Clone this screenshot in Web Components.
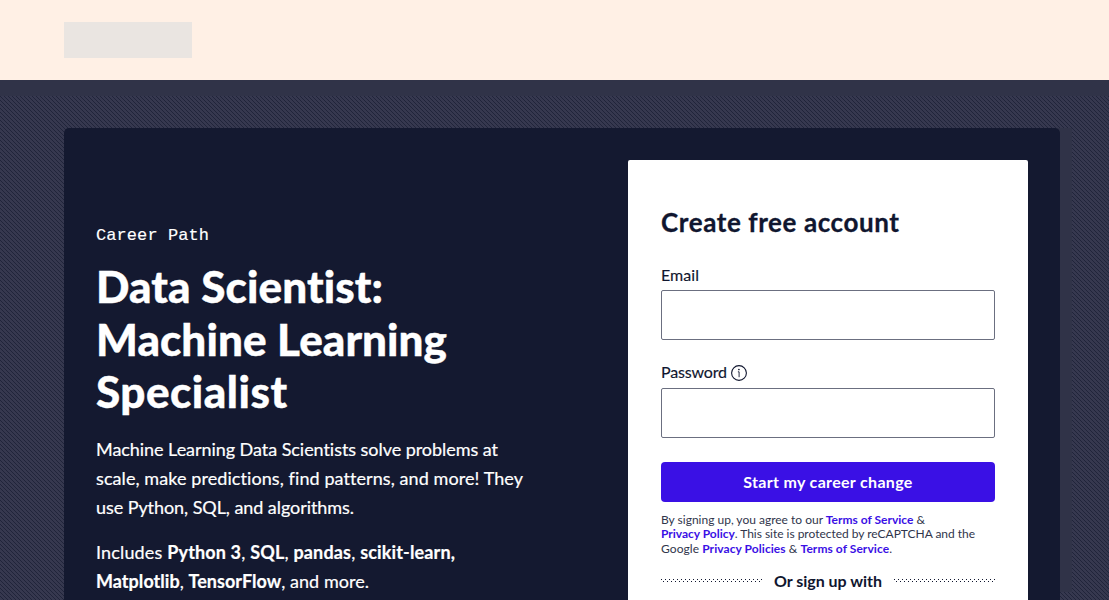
<!DOCTYPE html>
<html lang="en"><head><meta charset="utf-8"><title>Data Scientist: Machine Learning Specialist</title>
<style>html,body{margin:0;height:100%;overflow:hidden}body{font-family:Lato,"Liberation Sans",sans-serif;color:#10162f}</style></head><body>
<landing-page></landing-page>
<script>
const define=(name,html,setup)=>customElements.define(name,class extends HTMLElement{
  connectedCallback(){if(this.shadowRoot)return;this.attachShadow({mode:'open'}).innerHTML=html;if(setup)setup(this);}
});
// A single line of type whose tracking is adjusted to fill its measure.
define('text-line',`<style>:host{display:block;white-space:nowrap}span{display:inline-block;font-variant-ligatures:none}</style><span><slot></slot></span>`,el=>{
  const s=el.shadowRoot.querySelector('span');
  const w=s.getBoundingClientRect().width;
  s.style.letterSpacing=((+el.getAttribute('measure')-w)/(el.textContent.length-1)).toFixed(3)+'px';
});
define('site-header',`<style>:host{display:flex;align-items:center;height:80px;padding:0 64px;background:#fff0e5;box-sizing:border-box}i{width:128px;height:36px;background:#eae5e1}</style><i></i>`);
define('info-icon',`<style>:host{display:flex}</style><svg width="16" height="16" viewBox="0 0 16 16" fill="none" stroke="#10162f"><circle cx="8" cy="8" r="7.4" stroke-width="1.1"/><path d="M6.9 6.8h1.2v5.4" stroke-width=".9"/><circle cx="7.9" cy="4.5" r=".85" fill="#10162f" stroke="none"/></svg>`);
define('form-field',`<style>:host{display:block}label{display:flex;align-items:center;gap:4px;height:24px;font-size:16px;line-height:20px;-webkit-text-stroke:.15px}::slotted(text-line){margin-top:var(--label-shift,-2px)}input{display:block;box-sizing:border-box;width:100%;height:50px;margin:3px 0 0;border:1px solid #6b6f80;border-radius:2px;background:#fff}</style><label><slot></slot></label><input>`);
define('primary-button',`<style>:host{display:block}button{display:flex;align-items:center;justify-content:center;width:100%;height:40px;padding:0 0 1px;border:0;border-radius:4px;background:#3a10e5;color:#fff;font:700 16px/24px Lato,sans-serif}</style><button><slot></slot></button>`);
define('or-divider',`<style>:host{display:flex;align-items:center;gap:12px;font:700 16px/24px Lato,sans-serif}svg{flex:1;min-width:0;height:4px}</style>
<svg><defs><pattern id="p" width="4" height="4" patternUnits="userSpaceOnUse"><path d="M0 0h1v1H0zM2 2h1v1H2z" fill="#10162f"/></pattern></defs><rect width="100%" height="4" fill="url(#p)"/></svg><slot></slot><svg><rect width="100%" height="4" fill="url(#p)"/></svg>`);
define('signup-card',`<style>
:host{display:block;box-sizing:border-box;width:400px;height:520px;padding:46px 33px 0;background:#fff;border-radius:2px}
h2{margin:0;font:700 26px/32px Lato,sans-serif;-webkit-text-stroke:.3px}.email{margin-top:25px;--label-shift:-1px}.pass{margin-top:21px;--label-shift:-3px}primary-button{margin-top:24px}
.legal{margin-top:11px;font-size:12px;line-height:14.4px;color:#30354b}a{color:#3a10e5;font-weight:700}or-divider{margin-top:12.8px}
</style><h2><text-line measure="238">Create free account</text-line></h2>
<form-field class="email"><text-line measure="38">Email</text-line></form-field>
<form-field class="pass"><text-line measure="66">Password</text-line><info-icon></info-icon></form-field>
<primary-button><text-line measure="169">Start my career change</text-line></primary-button>
<div class="legal"><text-line measure="264">By signing up, you agree to our <a>Terms of Service</a> &amp;</text-line><text-line measure="314"><a>Privacy Policy</a>. This site is protected by reCAPTCHA and the</text-line><text-line measure="231">Google <a>Privacy Policies</a> &amp; <a>Terms of Service</a>.</text-line></div>
<or-divider><text-line measure="108">Or sign up with</text-line></or-divider>`);
define('path-intro',`<style>
:host{display:block;color:#fff;padding-top:64px}.kind{font:400 17px/24px "Liberation Mono",monospace;-webkit-text-stroke:.15px}
h1{margin:12px 0 0;font:900 44px/52.5px Lato,sans-serif;-webkit-text-stroke:.4px}
p{margin:17.5px 0 0;font-size:18px;line-height:28.8px;-webkit-text-stroke:.2px}p+p{margin-top:16.5px}
</style><div class="kind"><text-line measure="113">Career Path</text-line></div>
<h1><text-line measure="287">Data Scientist:</text-line><text-line measure="351">Machine Learning</text-line><text-line measure="191">Specialist</text-line></h1>
<p><text-line measure="402">Machine Learning Data Scientists solve problems at</text-line><text-line measure="427">scale, make predictions, find patterns, and more! They</text-line><text-line measure="258">use Python, SQL, and algorithms.</text-line></p>
<p><text-line measure="359">Includes <b>Python 3</b>, <b>SQL</b>, <b>pandas</b>, <b>scikit-learn,</b></text-line><text-line measure="273"><b>Matplotlib</b>, <b>TensorFlow</b>, and more.</text-line></p>`);
define('hero-panel',`<style>:host{display:flex;justify-content:space-between;box-sizing:border-box;width:996px;height:560px;padding:32px;background:#141930;border-radius:5px 5px 0 0}</style><path-intro></path-intro><signup-card></signup-card>`);
define('landing-page',`<style>
:host{display:flex;flex-direction:column;height:100vh;overflow:hidden}site-header{flex:none}
main{flex:1;min-height:0;overflow:hidden;padding:48px 0 0 64px;position:relative;z-index:0}
.weave{position:absolute;inset:0;width:100%;height:100%;z-index:-1}
</style><site-header></site-header><main><svg class="weave"><defs><pattern id="w" width="4" height="4" patternUnits="userSpaceOnUse"><path fill="#20243a" d="M0 0h1v1H0zM1 1h1v1H1zM2 2h1v1H2zM3 3h1v1H3z"/></pattern></defs><rect width="100%" height="100%" fill="#36384f"/><rect width="100%" height="100%" fill="url(#w)"/><rect width="100%" height="16" fill="#303348"/><rect x="1056" y="48" width="16" height="464" fill="#303348"/></svg><hero-panel></hero-panel></main>`);
</script></body></html>
